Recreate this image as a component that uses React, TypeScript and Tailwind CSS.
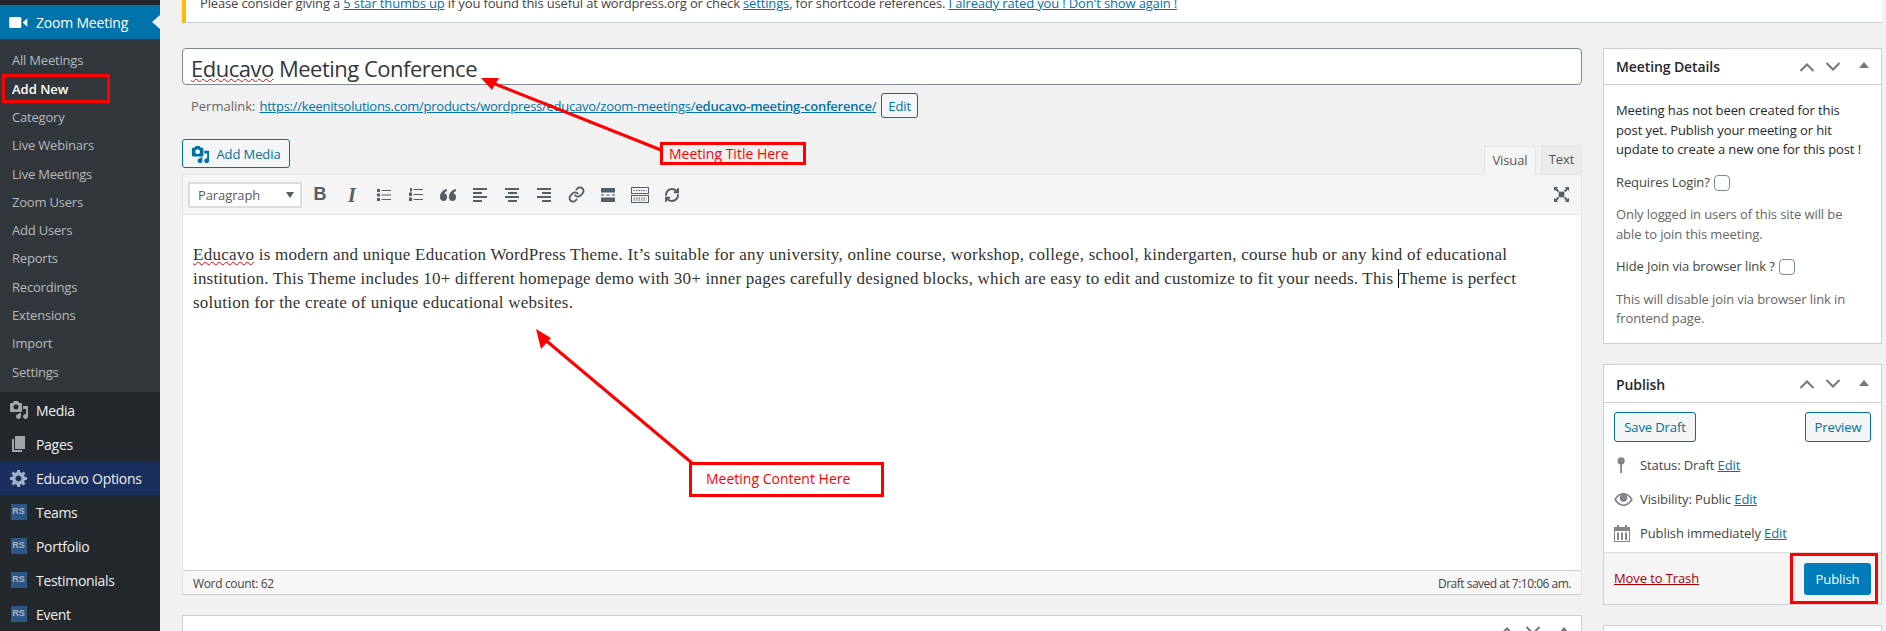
import { Link, RefreshCw } from "lucide-react";

const subItems = ["All Meetings", "Add New", "Category", "Live Webinars", "Live Meetings", "Zoom Users", "Add Users", "Reports", "Recordings", "Extensions", "Import", "Settings"];
const rsItems = ["Teams", "Portfolio", "Testimonials", "Event"];

const mediaPath = "M13 11V4c0-.55-.45-1-1-1h-1.67L9 1H5L3.67 3H2c-.55 0-1 .45-1 1v7c0 .55.45 1 1 1h10c.55 0 1-.45 1-1zM7 4.5c1.38 0 2.5 1.12 2.5 2.5S8.38 9.5 7 9.5 4.5 8.38 4.5 7 5.62 4.5 7 4.5zM14 6h5v10.5c0 1.38-1.12 2.5-2.5 2.5S14 17.88 14 16.5s1.12-2.5 2.5-2.5c.17 0 .34.02.5.05V9h-3V6zm-4 8.05V13h2v3.5c0 1.38-1.12 2.5-2.5 2.5S7 17.88 7 16.5 8.12 14 9.5 14c.17 0 .34.02.5.05z";
const gearPath = "M18 12h-2.18c-.17.7-.44 1.35-.81 1.93l1.54 1.54-2.1 2.1-1.54-1.54c-.58.36-1.23.63-1.91.79V19H8v-2.18c-.68-.16-1.33-.43-1.91-.79l-1.54 1.54-2.12-2.12 1.54-1.54c-.36-.58-.63-1.23-.79-1.91H1V9.03h2.17c.16-.7.44-1.35.8-1.94L2.43 5.55l2.1-2.1 1.54 1.54c.58-.37 1.24-.64 1.93-.81V2h3v2.18c.68.16 1.33.43 1.91.79l1.54-1.54 2.12 2.12-1.54 1.54c.36.59.64 1.24.8 1.94H18V12zm-8.5 1.5c1.66 0 3-1.34 3-3s-1.34-3-3-3-3 1.34-3 3 1.34 3 3 3z";

function Dash({ d, className }: { d: string; className: string }) {
  return (
    <svg viewBox="0 0 20 20" className={className} fill="currentColor">
      <path d={d} />
    </svg>
  );
}

function TopItem({ icon, label, active }: { icon: React.ReactNode; label: string; active?: boolean }) {
  return (
    <div className={`flex h-[34px] items-center text-[14px] tracking-[-0.3px] text-[#eee] ${active ? "bg-[#1b2f5e]" : ""}`}>
      <div className="flex w-[36px] justify-center pl-[1px]">{icon}</div>
      <span className="pt-[2px]">{label}</span>
    </div>
  );
}

function Sidebar() {
  return (
    <aside className="w-[160px] shrink-0 bg-[#23282d]">
      <div className="h-[5px]" />
      <div className="relative flex h-[34px] items-center bg-[#0073aa] text-[14px] tracking-[-0.2px] text-white">
        <svg viewBox="0 0 20 14" className="ml-[9px] mr-[8px] h-[13px] w-[19px]" fill="currentColor">
          <rect x="0" y="1" width="13" height="12" rx="1.5" />
          <path d="M14.5 7 19.500 2.500v9z" />
        </svg>
        Zoom Meeting
        <div className="absolute right-0 top-[10px] border-y-[7px] border-r-[8px] border-y-transparent border-r-[#f1f1f1]" />
      </div>
      <div className="bg-[#32373c] pb-[5px] pt-[8px] text-[13px]">
        {subItems.map((s) => (
          <div key={s} className={`flex h-[28.3px] items-center pl-[12px] ${s === "Add New" ? "font-semibold text-white" : "tracking-[-0.2px] text-[#b4b9be]"}`}>
            {s}
          </div>
        ))}
      </div>
      <div className="h-[1.4px]" />
      <TopItem label="Media" icon={<Dash d={mediaPath} className="h-[20px] w-[20px] text-[#a0a5aa]" />} />
      <TopItem label="Pages" icon={<Dash d="M6 15V2h10v13H6zm-1 1h8v2H3V5h2v11z" className="h-[20px] w-[20px] text-[#a0a5aa]" />} />
      <TopItem active label="Educavo Options" icon={<Dash d={gearPath} className="h-[20px] w-[20px] text-[#a3afc8]" />} />
      {rsItems.map((r) => (
        <TopItem
          key={r}
          label={r}
          icon={
            <div className="flex h-[16px] w-[16px] items-center justify-center bg-[#2c5887] font-['Liberation_Sans',sans-serif] text-[9px] font-bold tracking-normal text-[#a9b4c0]">
              RS
            </div>
          }
        />
      ))}
    </aside>
  );
}

function Chevrons() {
  return (
    <div className="flex items-center text-[#72777c]">
      <svg viewBox="0 0 16 10" className="h-[10px] w-[16px]" fill="none" stroke="currentColor" strokeWidth="2">
        <path d="M1.500 9 8 2.500 14.500 9" />
      </svg>
      <svg viewBox="0 0 16 10" className="ml-[10px] h-[10px] w-[16px]" fill="none" stroke="currentColor" strokeWidth="2">
        <path d="M1.500 1 8 7.500 14.500 1" />
      </svg>
      <div className="mb-[3px] ml-[18px] border-x-[5px] border-b-[6px] border-x-transparent border-b-[#72777c]" />
    </div>
  );
}

function BoxHeader({ title, className }: { title: string; className: string }) {
  return (
    <div className={`flex items-center justify-between border-b border-[#ccd0d4] px-[12px] text-[14px] font-semibold tracking-[-0.1px] text-[#23282d] ${className}`}>
      {title}
      <Chevrons />
    </div>
  );
}

function Checkbox() {
  return <span className="ml-[4px] inline-block h-[16px] w-[16px] rounded-[4px] border border-[#7e8993] bg-white align-[-4px]" />;
}

function MeetingDetails() {
  return (
    <div className="h-[296px] border border-[#ccd0d4] bg-white">
      <BoxHeader title="Meeting Details" className="h-[36px]" />
      <div className="px-[12px] pt-[16px] text-[13px] leading-[19.5px] tracking-[-0.1px] text-[#444]">
        <p className="font-medium text-[#23282d]">
          Meeting has not been created for this post yet. Publish your meeting or hit update to create a new one for this post !
        </p>
        <p className="mt-[13px]">
          Requires Login?
          <Checkbox />
        </p>
        <p className="mt-[13px] text-[#666]">Only logged in users of this site will be able to join this meeting.</p>
        <p className="mt-[13px]">
          Hide Join via browser link ?
          <Checkbox />
        </p>
        <p className="mt-[13px] text-[#666]">This will disable join via browser link in frontend page.</p>
      </div>
    </div>
  );
}

function OutlineButton({ children, className }: { children: React.ReactNode; className: string }) {
  return (
    <div className={`flex items-center justify-center rounded-[3px] border border-[#0071a1] bg-[#f3f5f6] pt-[2px] text-[13px] tracking-[-0.1px] text-[#0071a1] ${className}`}>
      {children}
    </div>
  );
}

function MetaRow({ icon, children }: { icon: React.ReactNode; children: React.ReactNode }) {
  return (
    <div className="flex h-[34px] items-center text-[13px] tracking-[-0.1px] text-[#444]">
      <div className="flex w-[26px] justify-start">{icon}</div>
      <div className="pt-[2px]">{children}</div>
    </div>
  );
}

function PublishBox() {
  return (
    <div className="mt-[20px] border border-[#ccd0d4] bg-white">
      <BoxHeader title="Publish" className="h-[38px] pt-[1px]" />
      <div className="flex justify-between px-[10px] pt-[9px]">
        <OutlineButton className="h-[30px] w-[82px]">Save Draft</OutlineButton>
        <OutlineButton className="h-[30px] w-[66px]">Preview</OutlineButton>
      </div>
      <div className="px-[10px] pb-[2px] pt-[6px]">
        <MetaRow
          icon={
            <svg viewBox="0 0 20 20" className="ml-[-1px] h-[18px] w-[18px] text-[#82878c]" fill="currentColor">
              <circle cx="9" cy="5.500" r="4" />
              <rect x="8" y="8" width="2" height="11" />
            </svg>
          }
        >
          Status: <span className="font-medium">Draft</span> <span className="text-[#0073aa] underline">Edit</span>
        </MetaRow>
        <MetaRow
          icon={
            <svg viewBox="0 0 20 14" className="h-[13px] w-[19px] text-[#82878c]" fill="currentColor">
              <path d="M10 0C5.800 0 2.200 2.800 0 7c2.200 4.200 5.800 7 10 7s7.800-2.800 10-7c-2.200-4.200-5.800-7-10-7zm0 12.300C6.900 12.300 4 10.200 2.200 7 3.300 5 5 3.400 7 2.500 6.200 3.300 5.800 4.300 5.800 5.500 5.800 7.800 7.700 9.700 10 9.700s4.200-1.900 4.200-4.200c0-1.200-.4-2.200-1.200-3 2 .9 3.700 2.500 4.800 4.500-1.800 3.200-4.700 5.300-7.800 5.300z" />
            </svg>
          }
        >
          Visibility: <span className="font-medium">Public</span> <span className="text-[#0073aa] underline">Edit</span>
        </MetaRow>
        <MetaRow
          icon={
            <svg viewBox="0 0 16 17" className="h-[17px] w-[16px] text-[#82878c]" fill="currentColor">
              <path d="M0 2h3V0h2v2h6V0h2v2h3v15H0V2zm1 4v10h14V6H1z" />
              <path d="M3 7.500h2V15H3zM7 7.500h2V15H7zM11 7.500h2V15h-2z" />
            </svg>
          }
        >
          Publish <span className="font-medium">immediately</span> <span className="text-[#0073aa] underline">Edit</span>
        </MetaRow>
      </div>
      <div className="flex h-[52px] items-center justify-between border-t border-[#ddd] bg-[#f5f5f5] px-[10px] text-[13px] tracking-[-0.1px]">
        <span className="text-[#a00] underline">Move to Trash</span>
        <div className="flex h-[32px] w-[67px] items-center justify-center rounded-[3px] bg-[#007cba] pt-[2px] text-white">Publish</div>
      </div>
    </div>
  );
}

function Bar({ className }: { className: string }) {
  return <div className={`h-[2px] bg-[#555d66] ${className}`} />;
}

function AlignIcon({ align }: { align: "items-start" | "items-center" | "items-end" }) {
  return (
    <div className={`flex h-[14px] w-[14px] flex-col justify-between ${align}`}>
      <Bar className="w-[14px]" />
      <Bar className="w-[9px]" />
      <Bar className="w-[14px]" />
      <Bar className="w-[9px]" />
    </div>
  );
}

function Tool({ children }: { children: React.ReactNode }) {
  return <div className="flex h-[28px] w-[32px] items-center justify-center text-[#555d66]">{children}</div>;
}

function Toolbar() {
  return (
    <div className="flex h-[40px] items-center border-b border-[#e5e5e5] bg-[#f5f5f5] pl-[5px] pr-[12px]">
      <div className="flex h-[26px] w-[114px] items-center justify-between border-2 border-[#ddd] bg-white pl-[8px] pr-[6px] text-[13px] tracking-[-0.1px] text-[#555d66]">
        <span className="pt-[2px]">Paragraph</span>
        <div className="border-x-[4px] border-t-[6px] border-x-transparent border-t-[#555d66]" />
      </div>
      <div className="ml-[2px] flex flex-1 items-center">
        <Tool>
          <span className="font-['Liberation_Sans',sans-serif] text-[18px] font-bold">B</span>
        </Tool>
        <Tool>
          <span className="font-['Liberation_Serif',serif] text-[20px] font-bold italic">I</span>
        </Tool>
        <Tool>
          <svg viewBox="0 0 14 12" className="h-[12px] w-[14px]" fill="currentColor">
            <rect x="0" y="0" width="3" height="3" />
            <rect x="0" y="4.500" width="3" height="3" />
            <rect x="0" y="9" width="3" height="3" />
            <rect x="4.500" y="1" width="9.500" height="1" />
            <rect x="4.500" y="5.500" width="9.500" height="1" />
            <rect x="4.500" y="10" width="9.500" height="1" />
          </svg>
        </Tool>
        <Tool>
          <svg viewBox="0 0 14 13" className="h-[13px] w-[14px]" fill="currentColor">
            <rect x="1" y="0" width="2" height="3.500" />
            <rect x="0" y="4.500" width="3" height="3.500" />
            <rect x="0" y="9.500" width="3" height="3.500" />
            <rect x="4.500" y="1" width="9.500" height="1" />
            <rect x="4.500" y="6" width="9.500" height="1" />
            <rect x="4.500" y="11" width="9.500" height="1" />
          </svg>
        </Tool>
        <Tool>
          <svg viewBox="0 0 16 12" className="h-[12px] w-[16px]" fill="currentColor">
            <path d="M7 0v2C5.500 2.500 4.800 3.500 4.600 4.700 6 4.500 7 5.600 7 8c0 2.500-1.300 4-3.500 4S0 10.500 0 8c0-4 2.500-7 7-8zM16 0v2c-1.500.5-2.200 1.500-2.400 2.700C15 4.500 16 5.600 16 8c0 2.500-1.300 4-3.500 4S9 10.500 9 8c0-4 2.500-7 7-8z" />
          </svg>
        </Tool>
        <Tool>
          <AlignIcon align="items-start" />
        </Tool>
        <Tool>
          <AlignIcon align="items-center" />
        </Tool>
        <Tool>
          <AlignIcon align="items-end" />
        </Tool>
        <Tool>
          <Link size={17} strokeWidth={2.5} />
        </Tool>
        <Tool>
          <svg viewBox="0 0 14 14" className="h-[14px] w-[14px]" fill="currentColor">
            <rect x="0" y="0" width="14" height="4.500" />
            <rect x="0" y="6.500" width="3" height="1" />
            <rect x="5.500" y="6.500" width="3" height="1" />
            <rect x="11" y="6.500" width="3" height="1" />
            <rect x="0" y="9.500" width="14" height="4.500" />
          </svg>
        </Tool>
        <Tool>
          <svg viewBox="0 0 18 16" className="h-[16px] w-[18px]" fill="none" stroke="currentColor">
            <rect x="0.500" y="0.500" width="17" height="6" />
            <rect x="0.500" y="8.500" width="17" height="7" />
            <path d="M2.500 3.500h13M2.500 11h13M2.500 13h13" strokeDasharray="1.500 1" />
          </svg>
        </Tool>
        <Tool>
          <RefreshCw size={16} strokeWidth={3} />
        </Tool>
      </div>
      <svg viewBox="0 0 16 16" className="h-[15px] w-[15px] text-[#555d66]" fill="currentColor">
        <rect x="5" y="5" width="6" height="6" />
        <path d="M0 0h4.500L3 1.500 5.500 4 4 5.500 1.500 3 0 4.500zM16 0v4.500L14.500 3 12 5.500 10.500 4 13 1.500 11.500 0zM0 16v-4.500L1.500 13 4 10.500 5.500 12 3 14.500 4.500 16zM16 16h-4.500l1.500-1.500-2.500-2.500 1.500-1.500 2.500 2.500 1.500-1.500z" />
      </svg>
    </div>
  );
}

function Editor() {
  return (
    <div>
      <div className="flex h-[35px] items-start justify-between">
        <OutlineButton className="h-[29px] w-[108px] gap-[6px]">
          <Dash d={mediaPath} className="h-[19px] w-[19px]" />
          <span className="pt-[1px]">Add Media</span>
        </OutlineButton>
        <div className="flex gap-[5px] self-end text-[13px] tracking-[-0.1px] text-[#555]">
          <div className="relative top-[1px] flex h-[29px] w-[52px] items-center justify-center border border-b-0 border-[#e5e5e5] bg-[#f5f5f5]">Visual</div>
          <div className="flex h-[29px] w-[41px] items-center justify-center border border-b-0 border-[#e5e5e5] bg-[#ebebeb]">Text</div>
        </div>
      </div>
      <div className="border border-[#e5e5e5] border-b-[#ccd0d4]">
        <Toolbar />
        <div className="h-[355px] bg-white pl-[10px] pt-[28px] font-['Liberation_Serif',serif] text-[17px] leading-[24px] text-[#333]">
          <div className="whitespace-nowrap tracking-[0.25px]">
            <span className="underline decoration-[#e00] decoration-wavy decoration-1">Educavo</span> is modern and unique Education WordPress Theme. It’s suitable for any university, online course, workshop, college, school, kindergarten, course hub or any kind of educational
          </div>
          <div className="whitespace-nowrap tracking-[0.2px]">
            institution. This Theme includes 10+ different homepage demo with 30+ inner pages carefully designed blocks, which are easy to edit and customize to fit your needs. This <span className="border-l border-black">Theme</span> is perfect
          </div>
          <div className="whitespace-nowrap tracking-[0.235px]">solution for the create of unique educational websites.</div>
        </div>
        <div className="flex h-[24px] items-center justify-between border-t border-[#ccd0d4] bg-[#f7f7f7] px-[10px] pt-[3px] text-[12px] tracking-[-0.35px] text-[#444]">
          <span>Word count: 62</span>
          <span className="tracking-[-0.5px]">Draft saved at 7:10:06 am.</span>
        </div>
      </div>
    </div>
  );
}

function Annotations() {
  return (
    <>
      <div className="absolute left-[2px] top-[74px] h-[29px] w-[108px] border-[3px] border-[#f00]" />
      <div className="absolute left-[660px] top-[142px] flex h-[23px] w-[146px] items-center border-[3px] border-[#f00] pl-[6px] text-[14px] text-[#f00]">Meeting Title Here</div>
      <div className="absolute left-[689px] top-[462px] h-[35px] w-[195px] border-[3px] border-[#f00] pl-[14px] pt-[3px] text-[14px] text-[#f00]">Meeting Content Here</div>
      <div className="absolute left-[1790px] top-[553px] h-[51px] w-[88px] border-[3px] border-[#f00]" />
      <svg className="pointer-events-none absolute left-0 top-0 h-[631px] w-[1886px]" viewBox="0 0 1886 631" fill="#f00">
        <line x1="661" y1="150" x2="490" y2="82" stroke="#f00" strokeWidth="3" />
        <path d="M481 78 499 78 492 90z" />
        <line x1="692" y1="463" x2="543" y2="338" stroke="#f00" strokeWidth="3" />
        <path d="M536 329 551 338 541 349z" />
      </svg>
    </>
  );
}

export default function App() {
  return (
    <div className="relative flex h-[631px] overflow-hidden bg-[#f1f1f1] font-['Open_Sans',sans-serif]">
      <Sidebar />
      <main className="min-w-0 flex-1 pl-[22px] pr-[4px]">
        <div className="-mt-[8px] flex h-[31px] items-center border-b border-[#ccd0d4] border-l-4 border-l-[#ffb900] bg-white pb-[7px] pl-[14px] text-[13px] tracking-[-0.15px] text-[#444]">
          <span>
            Please consider giving a <span className="text-[#0073aa] underline">5 star thumbs up</span> if you found this useful at wordpress.org or check <span className="text-[#0073aa] underline">settings</span>, for shortcode references. <span className="text-[#0073aa] underline">I already rated you ! Don't show again !</span>
          </span>
        </div>
        <div className="mt-[25px] flex gap-[21px]">
          <div className="w-[1400px] shrink-0">
            <div className="flex h-[37px] items-center rounded-[4px] border border-[#7e8993] bg-white pl-[8px] text-[22px] tracking-[-0.5px] text-[#32373c]">
              <span className="pt-[3px]">
                <span className="underline decoration-[#e00] decoration-wavy decoration-1">Educavo</span> Meeting Conference
              </span>
            </div>
            <div className="mt-[8px] flex h-[25px] items-center pl-[9px] text-[13px] text-[#666]">
              <span className="pt-[3px] font-medium">Permalink:</span>
              <span className="ml-[4px] pt-[3px] tracking-[-0.25px] text-[#0073aa] underline">
                https://keenitsolutions.com/products/wordpress/educavo/zoom-meetings/<span className="font-semibold">educavo-meeting-conference</span>/
              </span>
              <OutlineButton className="ml-[5px] h-[25px] w-[37px] text-[11px]">Edit</OutlineButton>
            </div>
            <div className="mt-[21px]">
              <Editor />
            </div>
            <div className="mt-[20px] flex h-[40px] items-start justify-between border border-[#ccd0d4] bg-white pl-[10px] pr-[12px] pt-[10px] text-[14px] font-semibold text-[#23282d]">
              Author
              <Chevrons />
            </div>
          </div>
          <div className="w-[279px] shrink-0">
            <MeetingDetails />
            <PublishBox />
            <div className="mt-[20px] h-[40px] border border-[#ccd0d4] bg-white" />
          </div>
        </div>
      </main>
      <Annotations />
    </div>
  );
}
